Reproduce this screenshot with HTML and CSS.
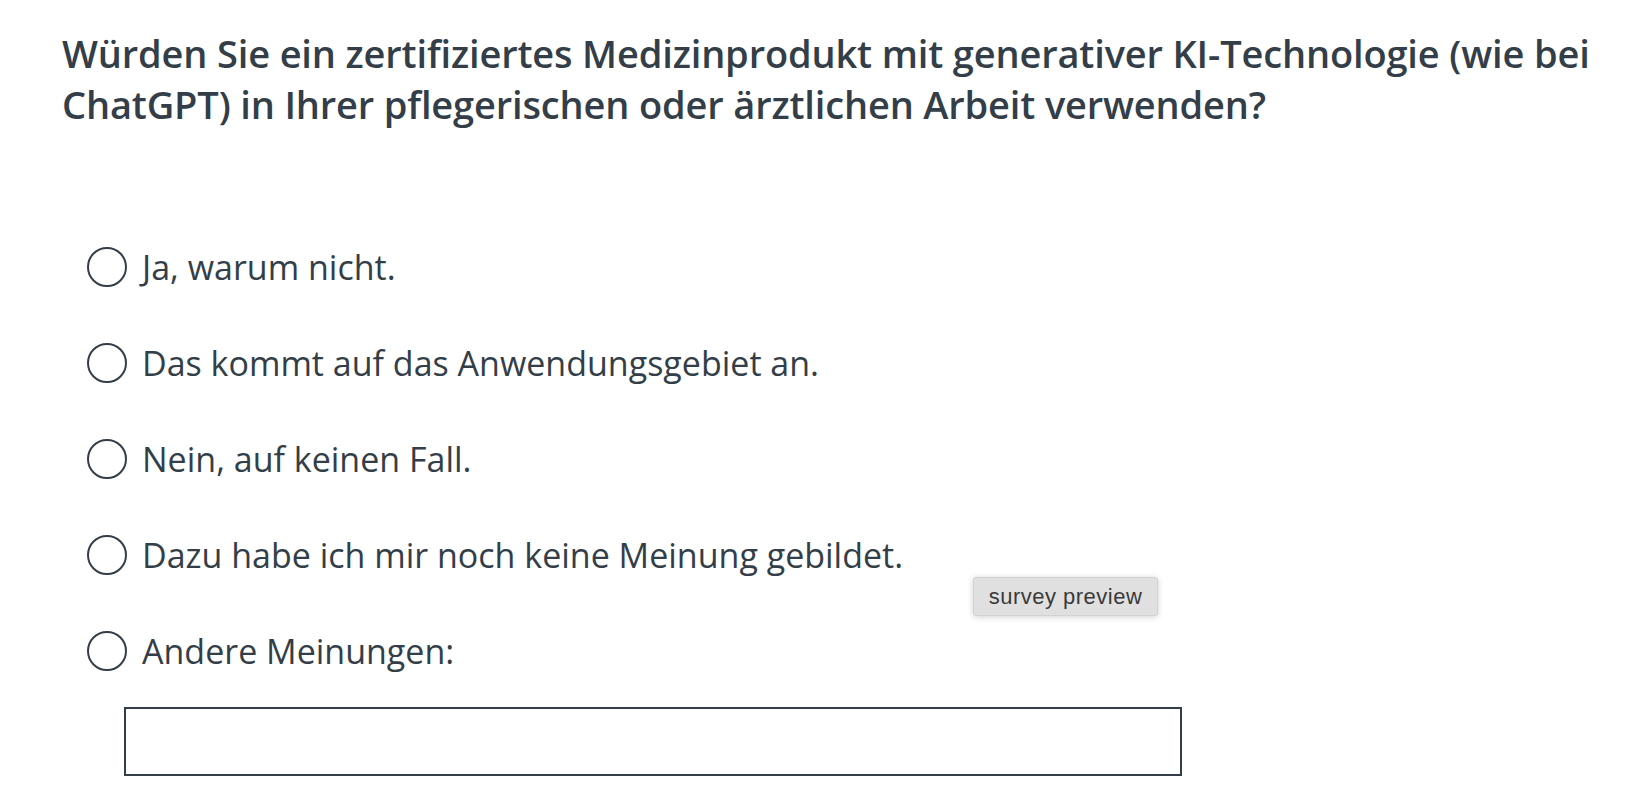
FILE: index.html
```html
<!DOCTYPE html>
<html lang="de">
<head>
<meta charset="utf-8">
<title>Umfrage</title>
<link rel="stylesheet" href="styles.css">
</head>
<body>
<main class="question">
  <h1 class="question-title">Würden Sie ein zertifiziertes Medizinprodukt mit generativer KI-Technologie (wie bei ChatGPT) in Ihrer pflegerischen oder ärztlichen Arbeit verwenden?</h1>
  <div class="answers">
    <label class="answer"><span class="radio"></span><span class="answer-text">Ja, warum nicht.</span></label>
    <label class="answer"><span class="radio"></span><span class="answer-text">Das kommt auf das Anwendungsgebiet an.</span></label>
    <label class="answer"><span class="radio"></span><span class="answer-text">Nein, auf keinen Fall.</span></label>
    <label class="answer"><span class="radio"></span><span class="answer-text">Dazu habe ich mir noch keine Meinung gebildet.</span></label>
    <label class="answer"><span class="radio"></span><span class="answer-text">Andere Meinungen:</span></label>
    <div class="other-box"></div>
  </div>
  <div class="preview-badge">survey preview</div>
</main>
</body>
</html>
```
FILE: styles.css
```css
html, body {
  margin: 0;
  padding: 0;
  background: #ffffff;
}
body {
  font-family: "Open Sans", "Noto Sans", sans-serif;
  color: #333e48;
}
.question {
  position: relative;
  padding: 28px 0 0 62px;
}
.question-title {
  margin: 0;
  width: 1562px;
  font-size: 38px;
  letter-spacing: -0.15px;
  line-height: 51px;
  font-weight: 600;
  color: #333e48;
}
.answers {
  display: flex;
  flex-direction: column;
  gap: 56px;
  margin-top: 117px;
  padding-left: 25px;
}
.answer {
  display: flex;
  align-items: center;
  gap: 15px;
  height: 40px;
  font-size: 34px;
  color: #333e48;
}
.radio {
  width: 36px;
  height: 36px;
  border: 2px solid #333e48;
  border-radius: 50%;
  flex: none;
}
.other-box {
  width: 1054px;
  height: 65px;
  border: 2px solid #333e48;
  margin-left: 37px;
  margin-top: -20px;
}
.preview-badge {
  position: absolute;
  left: 973px;
  top: 577px;
  width: 185px;
  height: 39px;
  box-sizing: border-box;
  display: flex;
  align-items: center;
  justify-content: center;
  background: #e0e0e0;
  border: 1px solid #d2d2d2;
  border-radius: 3px;
  box-shadow: 0 1px 6px rgba(0,0,0,0.18);
  font-family: "Liberation Sans", Arial, sans-serif;
  font-size: 22px;
  letter-spacing: 0.5px;
  color: #3a3a3a;
}
```
